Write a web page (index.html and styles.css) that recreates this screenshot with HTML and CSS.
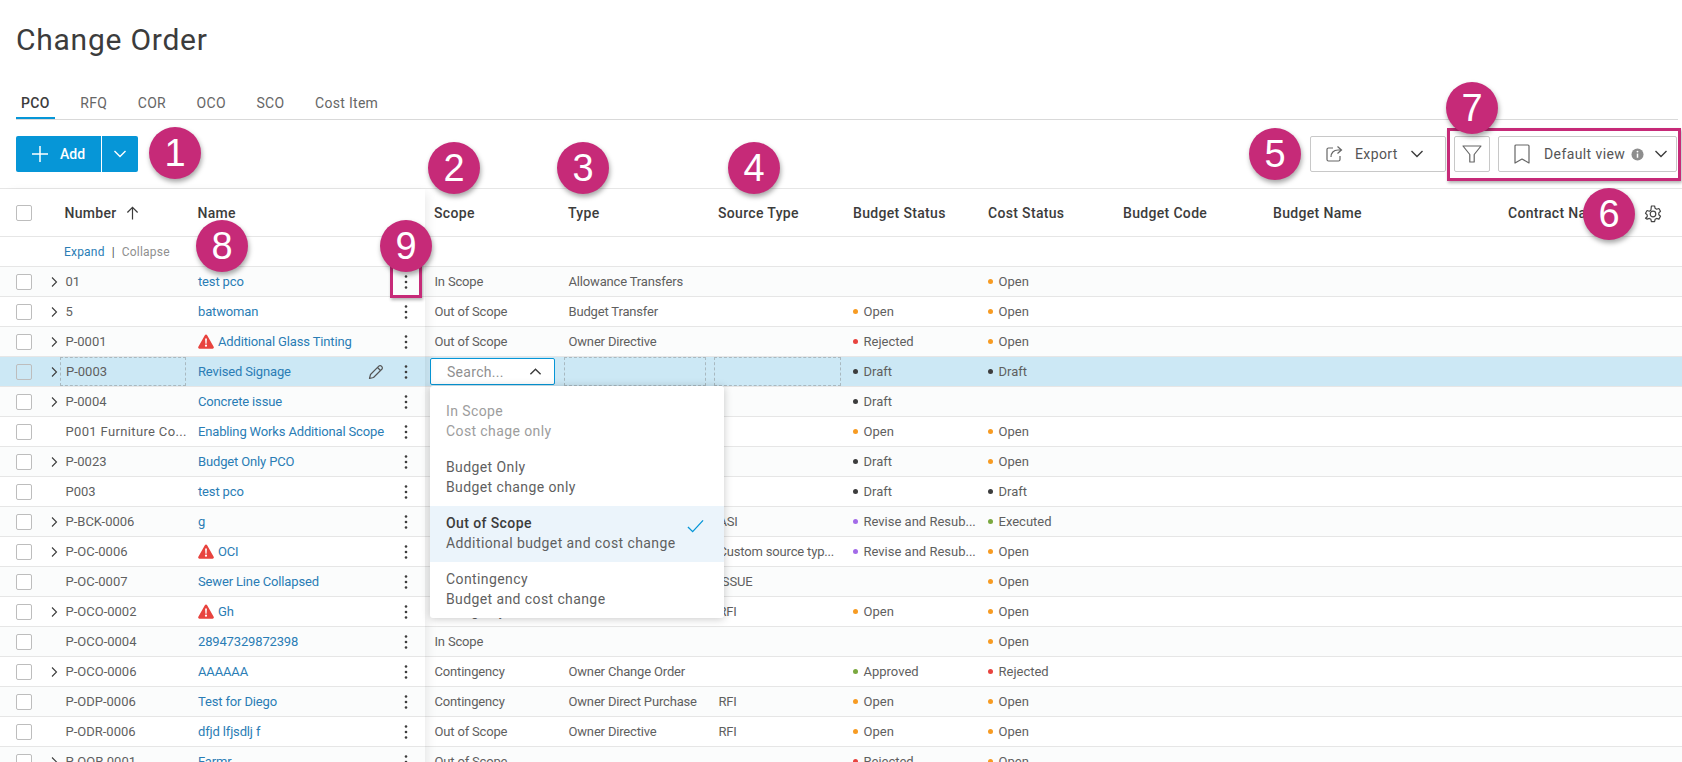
FILE: index.html
```html
<!DOCTYPE html>
<html lang="en">
<head>
<meta charset="utf-8">
<title>Change Order</title>
<link rel="stylesheet" href="styles.css">
</head>
<body>
<svg class="defs" width="0" height="0" aria-hidden="true">
  <symbol id="chev-r" viewBox="0 0 12 12"><path d="M4 1.500 8.500 6 4 10.500" fill="none" stroke="currentColor" stroke-width="1.100"/></symbol>
  <symbol id="chev-d" viewBox="0 0 14 14"><path d="M1.500 4 7 9.500 12.500 4" fill="none" stroke="currentColor" stroke-width="1.400"/></symbol>
  <symbol id="kebab" viewBox="0 0 4 16"><circle cx="2" cy="2.500" r="1.300"/><circle cx="2" cy="8" r="1.300"/><circle cx="2" cy="13.500" r="1.300"/></symbol>
  <symbol id="warn" viewBox="0 0 16 15"><path d="M8 .5a1.300 1.300 0 0 1 1.150.7l6.500 11.600a1.300 1.300 0 0 1-1.150 1.950h-13a1.300 1.300 0 0 1-1.150-1.950L6.850 1.200A1.300 1.300 0 0 1 8 .5Z" fill="#e8433e"/><path d="M7.100 4.500h1.800l-.3 5.200H7.400Z" fill="#fff"/><circle cx="8" cy="11.700" r="1.100" fill="#fff"/></symbol>
</svg>

<header class="page-head">
  <h1 class="page-title">Change Order</h1>
  <nav class="tabs">
    <a class="tab tab-active">PCO</a>
    <a class="tab">RFQ</a>
    <a class="tab">COR</a>
    <a class="tab">OCO</a>
    <a class="tab">SCO</a>
    <a class="tab">Cost Item</a>
  </nav>
  <div class="toolbar">
    <div class="split-btn">
      <button class="split-main">
        <svg class="ico-plus" viewBox="0 0 16 16"><path d="M8 0v16M0 8h16" stroke="#fff" stroke-width="1.500"/></svg>
        <span>Add</span>
      </button>
      <button class="split-caret"><svg class="ico-14"><use href="#chev-d"/></svg></button>
    </div>
    <div class="tools">
      <button class="tool tool-export">
        <svg class="ico-18" viewBox="0 0 18 18" fill="none" stroke="#666" stroke-width="1.200"><path d="M8 3H3.500A1.500 1.500 0 0 0 2 4.500v10A1.500 1.500 0 0 0 3.500 16h10a1.500 1.500 0 0 0 1.500-1.500V11"/><path d="M6 12c0-4 2.500-7 7-7h3M12.500 1.500 16.500 5l-4 3.500"/></svg>
        <span>Export</span>
        <svg class="ico-14"><use href="#chev-d"/></svg>
      </button>
      <button class="tool tool-filter">
        <svg class="ico-20" viewBox="0 0 20 20" fill="none" stroke="#666" stroke-width="1.200"><path d="M1 2h18l-6.800 8.500V18H7.800v-7.500Z" stroke-linejoin="round"/></svg>
      </button>
      <button class="tool tool-view">
        <svg class="ico-18b" viewBox="0 0 16 20" fill="none" stroke="#666" stroke-width="1.200"><path d="M2 1h12a1 1 0 0 1 1 1v17l-7-4-7 4V2a1 1 0 0 1 1-1Z" stroke-linejoin="round"/></svg>
        <span class="view-label">Default view</span>
        <svg class="ico-info" viewBox="0 0 14 14"><circle cx="7" cy="7" r="6.500" fill="#8e8e8e"/><path d="M6.200 6h1.600v4.500H6.200Z" fill="#fff"/><circle cx="7" cy="3.900" r="1" fill="#fff"/></svg>
        <svg class="ico-14 view-chev"><use href="#chev-d"/></svg>
      </button>
    </div>
  </div>
</header>

<main class="table">
  <section class="pane-left">
    <div class="lrow lhead">
      <span class="check"></span>
      <span class="lhead-num">Number</span>
      <svg class="ico-sort" viewBox="0 0 14 14" fill="none" stroke="#3c3c3c" stroke-width="1.300"><path d="M7 14V1M1.500 6.500 7 1l5.500 5.500"/></svg>
      <span class="lhead-name">Name</span>
    </div>
    <div class="lexpand"><a class="link">Expand</a><span class="sep">|</span><span class="muted">Collapse</span></div>

    <div class="lrow"><span class="check"></span><svg class="ico-chev"><use href="#chev-r"/></svg><span class="num">01</span><span class="name"><a class="link">test pco</a></span><svg class="ico-kebab"><use href="#kebab"/></svg></div>
    <div class="lrow"><span class="check"></span><svg class="ico-chev"><use href="#chev-r"/></svg><span class="num">5</span><span class="name"><a class="link">batwoman</a></span><svg class="ico-kebab"><use href="#kebab"/></svg></div>
    <div class="lrow"><span class="check"></span><svg class="ico-chev"><use href="#chev-r"/></svg><span class="num">P-0001</span><span class="name"><svg class="ico-warn"><use href="#warn"/></svg><a class="link">Additional Glass Tinting</a></span><svg class="ico-kebab"><use href="#kebab"/></svg></div>
    <div class="lrow lrow-active"><span class="check"></span><svg class="ico-chev"><use href="#chev-r"/></svg><span class="num num-dashed">P-0003</span><span class="name"><a class="link">Revised Signage</a></span>
      <svg class="ico-pencil" viewBox="0 0 16 16" fill="none" stroke="#555" stroke-width="1.200"><path d="M1.500 14.500 2.500 10.500 10.800 2.200a1.800 1.800 0 0 1 2.600 0l.4.400a1.800 1.800 0 0 1 0 2.600L5.500 13.500Z" stroke-linejoin="round"/><path d="M9.500 3.500l3 3"/></svg>
      <svg class="ico-kebab"><use href="#kebab"/></svg></div>
    <div class="lrow"><span class="check"></span><svg class="ico-chev"><use href="#chev-r"/></svg><span class="num">P-0004</span><span class="name"><a class="link">Concrete issue</a></span><svg class="ico-kebab"><use href="#kebab"/></svg></div>
    <div class="lrow"><span class="check"></span><span class="ico-gap"></span><span class="num num-wide">P001 Furniture Co...</span><span class="name"><a class="link">Enabling Works Additional Scope</a></span><svg class="ico-kebab"><use href="#kebab"/></svg></div>
    <div class="lrow"><span class="check"></span><svg class="ico-chev"><use href="#chev-r"/></svg><span class="num">P-0023</span><span class="name"><a class="link">Budget Only PCO</a></span><svg class="ico-kebab"><use href="#kebab"/></svg></div>
    <div class="lrow"><span class="check"></span><span class="ico-gap"></span><span class="num">P003</span><span class="name"><a class="link">test pco</a></span><svg class="ico-kebab"><use href="#kebab"/></svg></div>
    <div class="lrow"><span class="check"></span><svg class="ico-chev"><use href="#chev-r"/></svg><span class="num">P-BCK-0006</span><span class="name"><a class="link">g</a></span><svg class="ico-kebab"><use href="#kebab"/></svg></div>
    <div class="lrow"><span class="check"></span><svg class="ico-chev"><use href="#chev-r"/></svg><span class="num">P-OC-0006</span><span class="name"><svg class="ico-warn"><use href="#warn"/></svg><a class="link">OCI</a></span><svg class="ico-kebab"><use href="#kebab"/></svg></div>
    <div class="lrow"><span class="check"></span><span class="ico-gap"></span><span class="num">P-OC-0007</span><span class="name"><a class="link">Sewer Line Collapsed</a></span><svg class="ico-kebab"><use href="#kebab"/></svg></div>
    <div class="lrow"><span class="check"></span><svg class="ico-chev"><use href="#chev-r"/></svg><span class="num">P-OCO-0002</span><span class="name"><svg class="ico-warn"><use href="#warn"/></svg><a class="link">Gh</a></span><svg class="ico-kebab"><use href="#kebab"/></svg></div>
    <div class="lrow"><span class="check"></span><span class="ico-gap"></span><span class="num">P-OCO-0004</span><span class="name"><a class="link">28947329872398</a></span><svg class="ico-kebab"><use href="#kebab"/></svg></div>
    <div class="lrow"><span class="check"></span><svg class="ico-chev"><use href="#chev-r"/></svg><span class="num">P-OCO-0006</span><span class="name"><a class="link">AAAAAA</a></span><svg class="ico-kebab"><use href="#kebab"/></svg></div>
    <div class="lrow"><span class="check"></span><span class="ico-gap"></span><span class="num">P-ODP-0006</span><span class="name"><a class="link">Test for Diego</a></span><svg class="ico-kebab"><use href="#kebab"/></svg></div>
    <div class="lrow"><span class="check"></span><span class="ico-gap"></span><span class="num">P-ODR-0006</span><span class="name"><a class="link">dfjd lfjsdlj f</a></span><svg class="ico-kebab"><use href="#kebab"/></svg></div>
    <div class="lrow"><span class="check"></span><svg class="ico-chev"><use href="#chev-r"/></svg><span class="num">P-OOR-0001</span><span class="name"><a class="link">Farmr</a></span><svg class="ico-kebab"><use href="#kebab"/></svg></div>
  </section>

  <section class="pane-right">
    <div class="rrow rhead"><span>Scope</span><span>Type</span><span>Source Type</span><span>Budget Status</span><span>Cost Status</span><span>Budget Code</span><span>Budget Name</span><span>Contract Name</span></div>
    <div class="rexpand"></div>

    <div class="rrow"><span>In Scope</span><span>Allowance Transfers</span><span></span><span></span><span class="st"><i class="dot d-open"></i>Open</span></div>
    <div class="rrow"><span>Out of Scope</span><span>Budget Transfer</span><span></span><span class="st"><i class="dot d-open"></i>Open</span><span class="st"><i class="dot d-open"></i>Open</span></div>
    <div class="rrow"><span>Out of Scope</span><span>Owner Directive</span><span></span><span class="st"><i class="dot d-rej"></i>Rejected</span><span class="st"><i class="dot d-open"></i>Open</span></div>
    <div class="rrow rrow-active">
      <span class="cell-input"><span class="search">Search...</span><svg class="ico-up" viewBox="0 0 14 14"><path d="M1.500 10 7 4.500 12.500 10" fill="none" stroke="#3c3c3c" stroke-width="1.500"/></svg></span>
      <span class="cell-dashed"></span><span class="cell-dashed"></span>
      <span class="st"><i class="dot d-draft"></i>Draft</span><span class="st"><i class="dot d-draft"></i>Draft</span>
    </div>
    <div class="rrow"><span></span><span></span><span></span><span class="st"><i class="dot d-draft"></i>Draft</span><span></span></div>
    <div class="rrow"><span></span><span></span><span></span><span class="st"><i class="dot d-open"></i>Open</span><span class="st"><i class="dot d-open"></i>Open</span></div>
    <div class="rrow"><span></span><span></span><span></span><span class="st"><i class="dot d-draft"></i>Draft</span><span class="st"><i class="dot d-open"></i>Open</span></div>
    <div class="rrow"><span></span><span></span><span></span><span class="st"><i class="dot d-draft"></i>Draft</span><span class="st"><i class="dot d-draft"></i>Draft</span></div>
    <div class="rrow"><span></span><span></span><span>ASI</span><span class="st"><i class="dot d-rev"></i>Revise and Resub...</span><span class="st"><i class="dot d-exe"></i>Executed</span></div>
    <div class="rrow"><span></span><span></span><span>Custom source typ...</span><span class="st"><i class="dot d-rev"></i>Revise and Resub...</span><span class="st"><i class="dot d-open"></i>Open</span></div>
    <div class="rrow"><span></span><span></span><span>ISSUE</span><span></span><span class="st"><i class="dot d-open"></i>Open</span></div>
    <div class="rrow"><span>Contingency</span><span></span><span>RFI</span><span class="st"><i class="dot d-open"></i>Open</span><span class="st"><i class="dot d-open"></i>Open</span></div>
    <div class="rrow"><span>In Scope</span><span></span><span></span><span></span><span class="st"><i class="dot d-open"></i>Open</span></div>
    <div class="rrow"><span>Contingency</span><span>Owner Change Order</span><span></span><span class="st"><i class="dot d-exe"></i>Approved</span><span class="st"><i class="dot d-rej"></i>Rejected</span></div>
    <div class="rrow"><span>Contingency</span><span>Owner Direct Purchase</span><span>RFI</span><span class="st"><i class="dot d-open"></i>Open</span><span class="st"><i class="dot d-open"></i>Open</span></div>
    <div class="rrow"><span>Out of Scope</span><span>Owner Directive</span><span>RFI</span><span class="st"><i class="dot d-open"></i>Open</span><span class="st"><i class="dot d-open"></i>Open</span></div>
    <div class="rrow"><span>Out of Scope</span><span></span><span></span><span class="st"><i class="dot d-rej"></i>Rejected</span><span class="st"><i class="dot d-open"></i>Open</span></div>
  </section>

  <svg class="ico-gear" viewBox="0 0 18 18" fill="none" stroke="#444" stroke-width="1.200"><circle cx="9" cy="9" r="2.800"/><path d="M7.400 1h3.200l.5 2.300 1.500.9 2.300-.7 1.600 2.800-1.700 1.600v1.800l1.700 1.600-1.600 2.800-2.300-.7-1.500.9-.5 2.300H7.400l-.5-2.300-1.500-.9-2.300.7L1.500 13.300l1.700-1.600V9.900L1.500 8.300 3.100 5.500l2.300.7 1.500-.9Z" stroke-linejoin="round"/></svg>

  <div class="menu">
    <div class="opt opt-off"><span>In Scope</span><span>Cost chage only</span></div>
    <div class="opt"><span>Budget Only</span><span>Budget change only</span></div>
    <div class="opt opt-sel"><span class="opt-title">Out of Scope</span><span>Additional budget and cost change</span>
      <svg class="ico-check" viewBox="0 0 18 14" fill="none" stroke="#0696d7" stroke-width="1.400"><path d="M1 8l5 5L17 1"/></svg></div>
    <div class="opt"><span>Contingency</span><span>Budget and cost change</span></div>
  </div>
</main>

<div class="mark-box mark-kebab"></div>
<div class="mark-box mark-tools"></div>
<div class="badge b1">1</div>
<div class="badge b2">2</div>
<div class="badge b3">3</div>
<div class="badge b4">4</div>
<div class="badge b5">5</div>
<div class="badge b6">6</div>
<div class="badge b7">7</div>
<div class="badge b8">8</div>
<div class="badge b9">9</div>
</body>
</html>
```

FILE: styles.css
```css
* { box-sizing: border-box; }
html, body { margin: 0; height: 762px; overflow: hidden; }
body {
  position: relative;
  background: #fff;
  color: #5f5f5f;
  font-family: Roboto, "Liberation Sans", sans-serif;
  font-size: 13px;
}
.defs { position: absolute; }
button { font: inherit; color: inherit; background: #fff; cursor: pointer; }

/* Page head */
.page-title {
  margin: 0 0 31px 16px;
  padding-top: 22px;
  height: 57px;
  font-size: 30px;
  font-weight: 400;
  line-height: 36px;
  letter-spacing: .75px;
  color: #3c3c3c;
}
.tabs {
  display: flex;
  gap: 20.600px;
  margin: 0 4px 0 16px;
  height: 32px;
  border-bottom: 1px solid #d9d9d9;
}
.tab {
  height: 31px;
  padding: 0 5px;
  line-height: 30px;
  font-size: 14px;
  color: #666;
  letter-spacing: .3px;
  border-bottom: 2px solid transparent;
}
.tab-active { color: #3c3c3c; font-weight: 500; border-bottom-color: #0696d7; }

.toolbar {
  display: flex;
  justify-content: space-between;
  margin: 16px 5px 16px 16px;
  height: 36px;
}
.split-btn { display: flex; width: 122px; height: 36px; border-radius: 2px; overflow: hidden; }
.split-main, .split-caret { border: 0; background: #0696d7; color: #fff; display: flex; align-items: center; }
.split-main { width: 85px; padding-left: 16px; gap: 12px; font-weight: 500; font-size: 14px; }
.split-caret { width: 37px; justify-content: center; border-left: 1px solid #fff; }
.ico-plus { width: 16px; height: 16px; }
.ico-14 { width: 14px; height: 14px; color: #3c3c3c; flex: none; }
.split-caret .ico-14 { color: #fff; }

.tools { display: flex; gap: 8px; }
.tool {
  display: flex;
  align-items: center;
  height: 36px;
  border: 1px solid #c8c8c8;
  border-radius: 2px;
  font-size: 14px;
  color: #555;
  letter-spacing: .4px;
}
.tool-export { width: 136px; padding: 0 0 0 14px; gap: 12px; }
.tool-filter { width: 36px; justify-content: center; padding: 0; }
.tool-view { width: 179px; padding: 0 0 0 15px; }
.ico-18 { width: 18px; height: 18px; }
.ico-20 { width: 20px; height: 20px; }
.ico-18b { width: 16px; height: 20px; }
.view-label { margin-left: 14px; }
.ico-info { width: 13px; height: 13px; margin-left: 6px; }
.view-chev { margin-left: 10px; }

/* Table */
.table {
  position: relative;
  display: flex;
  border-top: 1px solid #e6e6e6;
}
.pane-left {
  flex: none;
  width: 425px;
  position: relative;
  z-index: 2;
  background: #fff;
  box-shadow: 6px 0 10px -4px rgba(0, 0, 0, .09);
}
.pane-right { flex: 1; min-width: 0; }

.lrow {
  display: flex;
  align-items: center;
  height: 30px;
  padding-left: 16px;
  border-bottom: 1px solid #e6e6e6;
  white-space: nowrap;
}
.lrow:nth-child(odd) { background: #fbfcfc; }
.lhead, .lhead:nth-child(odd) { height: 48px; background: #fff; font-weight: 500; color: #3c3c3c; font-size: 14px; letter-spacing: .3px; }
.check {
  flex: none;
  width: 16px;
  height: 16px;
  border: 1px solid #bdbdbd;
  border-radius: 2px;
  background: #fff;
}
.ico-chev { width: 12px; height: 12px; margin-left: 16px; color: #3c3c3c; flex: none; }
.ico-gap { width: 12px; margin-left: 16px; flex: none; }
.num { width: 138px; padding-left: 5.500px; flex: none; }
.num-wide { letter-spacing: .35px; }
.name { flex: 1; display: flex; align-items: center; letter-spacing: -.15px; }
.ico-warn { width: 16px; height: 15px; margin-right: 4px; flex: none; }
.ico-kebab { width: 4px; height: 16px; fill: #3c3c3c; margin: 0 17.500px 0 0; flex: none; }
.ico-pencil { width: 16px; height: 16px; margin-right: 20px; flex: none; }
.link { color: #2a7db5; }
.lhead-num { margin-left: 32.500px; }
.ico-sort { width: 13px; height: 14px; margin-left: 9px; }
.lhead-name { margin-left: 59px; }

.lexpand {
  display: flex;
  align-items: center;
  height: 30px;
  padding-left: 64px;
  border-bottom: 1px solid #e6e6e6;
  font-size: 12px;
  letter-spacing: .2px;
}
.sep { margin: 0 7px; color: #555; }
.muted { color: #8f8f8f; }

.lrow-active, .lrow-active:nth-child(odd) { background: #cce8f5; }
.lrow-active .check { background: transparent; }
.num-dashed {
  align-self: stretch;
  display: flex;
  align-items: center;
  width: 125.500px;
  margin: 0 12.500px 0 0;
  padding-left: 5px;
  border: 1px dashed #a9b9c0;
}

.rrow {
  display: grid;
  grid-template-columns: 134px 150px 135px 135px 135px 150px 235px 1fr;
  align-items: center;
  height: 30px;
  border-bottom: 1px solid #e6e6e6;
  white-space: nowrap;
}
.rrow:nth-child(odd) { background: #fbfcfc; }
.rrow > span { padding-left: 9.500px; min-width: 0; overflow: hidden; letter-spacing: -.17px; }
.rhead, .rhead:nth-child(odd) { height: 48px; background: #fff; font-weight: 500; color: #3c3c3c; font-size: 14px; }
.rrow.rhead > span { padding-left: 9px; letter-spacing: .33px; }
.rexpand { height: 30px; border-bottom: 1px solid #e6e6e6; }
.rrow > .st { display: flex; align-items: center; padding-left: 9px; letter-spacing: 0; }
.dot { width: 5px; height: 5px; border-radius: 50%; margin-right: 5.500px; flex: none; }
.d-open { background: #f79b22; }
.d-rej { background: #e8433e; }
.d-draft { background: #3c3c3c; }
.d-rev { background: #a36be8; }
.d-exe { background: #7aa83f; }

.rrow-active, .rrow-active:nth-child(odd) { background: #cce8f5; }
.rrow-active { align-items: stretch; }
.rrow-active .st { align-self: center; }
.rrow > .cell-input {
  display: flex;
  align-items: center;
  justify-content: space-between;
  margin: 1px 4px 1px 5px;
  padding: 0 12px 0 16px;
  background: #fff;
  border: 1px solid #0696d7;
  border-radius: 2px;
}
.search { color: #8f8f8f; font-size: 14px; letter-spacing: .3px; }
.ico-up { width: 13px; height: 13px; }
.cell-dashed { margin: 0 3.500px 0 5px; border: 1px dashed #a9b9c0; }

.ico-gear { position: absolute; left: 1644px; top: 16px; width: 18px; height: 18px; z-index: 3; }

/* Dropdown */
.menu {
  position: absolute;
  left: 430px;
  top: 197px;
  z-index: 5;
  width: 294px;
  height: 232px;
  padding-top: 8px;
  background: #fff;
  border-radius: 3px;
  box-shadow: 0 1px 8px rgba(0, 0, 0, .22);
  overflow: hidden;
}
.opt {
  position: relative;
  display: flex;
  flex-direction: column;
  justify-content: center;
  height: 56px;
  padding: 0 0 2px 16px;
  font-size: 14px;
  line-height: 20px;
  letter-spacing: .4px;
  color: #5f5f5f;
}
.opt-off { color: #9d9d9d; }
.opt-sel { background: #ebf4fb; }
.opt-title { font-weight: 500; color: #3c3c3c; }
.ico-check { position: absolute; right: 20px; top: 13px; width: 17px; height: 14px; }

/* Annotations */
.badge {
  position: absolute;
  z-index: 9;
  width: 52px;
  height: 52px;
  border-radius: 50%;
  background: #c62a78;
  color: #fff;
  font-family: "Liberation Sans", sans-serif;
  font-size: 38px;
  line-height: 52px;
  text-align: center;
  box-shadow: 1px 3px 5px rgba(0, 0, 0, .35);
}
.b1 { left: 149px; top: 127px; }
.b2 { left: 428px; top: 142px; }
.b3 { left: 557px; top: 142px; }
.b4 { left: 728px; top: 142px; }
.b5 { left: 1249px; top: 128px; }
.b6 { left: 1583px; top: 188px; }
.b7 { left: 1446px; top: 82px; }
.b8 { left: 196px; top: 220px; }
.b9 { left: 380px; top: 220px; }
.mark-box {
  position: absolute;
  z-index: 8;
  border: 3px solid #c62a78;
  box-shadow: 1px 2px 3px rgba(0, 0, 0, .3);
}
.mark-kebab { left: 390px; top: 262px; width: 32px; height: 36px; }
.mark-tools { left: 1447px; top: 128px; width: 234px; height: 53px; }
```
